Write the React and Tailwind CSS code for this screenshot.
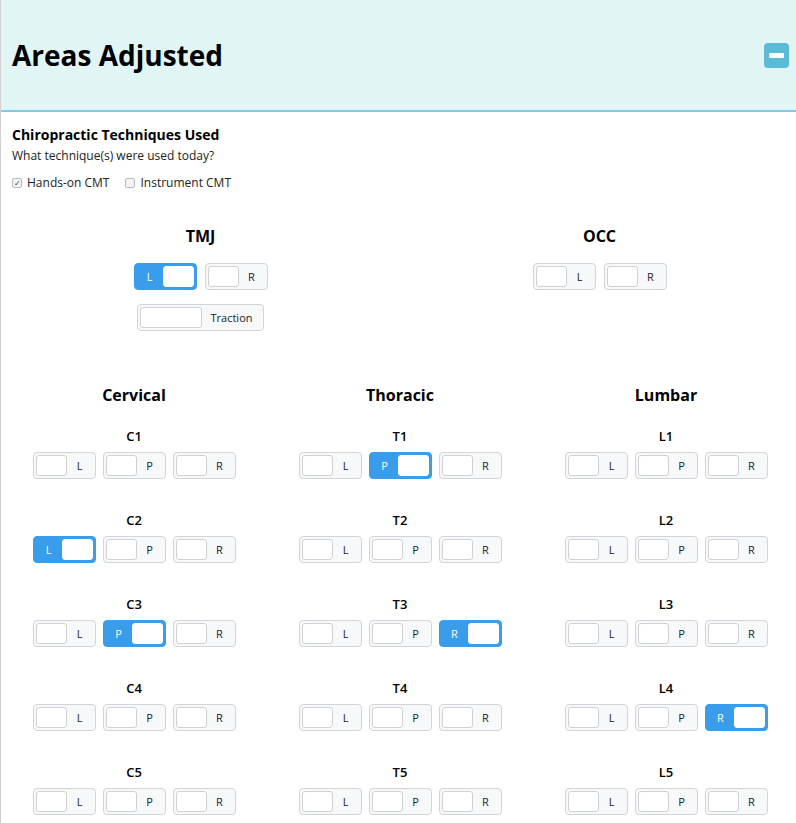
import React from "react";

const font = { fontFamily: '"Open Sans", "Noto Sans", sans-serif' };

const Toggle = ({ label, active, wide }) => (
  <div
    className={`flex h-[27px] items-center rounded-[4px] border p-[2px] ${wide ? "w-[127px]" : "w-[63px]"} ${
      active ? "flex-row-reverse border-[#3a9dec] bg-[#3a9dec]" : "border-[#d2d4d7] bg-[#f7f8fa]"
    }`}
  >
    <div
      className={`h-full rounded-[3px] border bg-white ${wide ? "w-[62px]" : "w-[31px]"} ${
        active ? "border-white" : "border-[#cfd1d4]"
      }`}
    />
    <span className={`flex-1 text-center text-[11px] leading-none ${active ? "text-white" : "text-[#222]"}`}>
      {label}
    </span>
  </div>
);

const Check = ({ checked, label }) => (
  <label className="flex items-center gap-[5px] text-[12px] leading-4 text-[#222]">
    <span className="flex h-[10px] w-[10px] items-center justify-center rounded-[2px] border border-[#b9bbbe] bg-[#f3f3f3] text-[8px] leading-none text-[#444]">
      {checked ? "✓" : ""}
    </span>
    {label}
  </label>
);

const spine = {
  Cervical: { prefix: "C", active: { 2: "L", 3: "P" } },
  Thoracic: { prefix: "T", active: { 1: "P", 3: "R" } },
  Lumbar: { prefix: "L", active: { 4: "R" } },
};

export default function App() {
  return (
    <div className="min-h-screen overflow-hidden border-l border-[#cfcfcf] bg-white text-black" style={font}>
      {/* header */}
      <div className="flex h-[112px] items-center justify-between border-b-2 border-[#7fcae1] bg-[#e1f5f4] pl-[11px] pr-[7px]">
        <h1 className="text-[28px] font-bold leading-none">Areas Adjusted</h1>
        <button className="flex h-[25px] w-[25px] items-center justify-center rounded-[4px] bg-[#5abbd6]">
          <span className="h-[5px] w-[15px] rounded-[1px] bg-white" />
        </button>
      </div>

      <div className="pl-[11px] pt-[13px]">
        <div className="text-[14px] font-bold leading-5">Chiropractic Techniques Used</div>
        <div className="mt-[3px] text-[12px] leading-4 text-[#222]">What technique(s) were used today?</div>
        <div className="mt-[11px] flex gap-[16px]">
          <Check checked label="Hands-on CMT" />
          <Check label="Instrument CMT" />
        </div>
      </div>

      {/* TMJ / OCC */}
      <div className="mt-[33px] grid w-[798px] grid-cols-2">
        <div className="flex flex-col items-center">
          <div className="text-[16px] font-bold leading-6">TMJ</div>
          <div className="mt-[15px] flex gap-[8px]">
            <Toggle label="L" active />
            <Toggle label="R" />
          </div>
          <div className="mt-[14px]">
            <Toggle label="Traction" wide />
          </div>
        </div>
        <div className="flex flex-col items-center">
          <div className="text-[16px] font-bold leading-6">OCC</div>
          <div className="mt-[15px] flex gap-[8px]">
            <Toggle label="L" />
            <Toggle label="R" />
          </div>
        </div>
      </div>

      {/* spine */}
      <div className="mt-[52px] grid w-[798px] grid-cols-3">
        {Object.entries(spine).map(([name, { prefix, active }]) => (
          <div key={name} className="flex flex-col items-center">
            <div className="text-[16px] font-bold leading-6">{name}</div>
            {[1, 2, 3, 4, 5].map((n) => (
              <div key={n} className={`flex flex-col items-center ${n === 1 ? "mt-[20px]" : "mt-[32px]"}`}>
                <div className="text-[13px] font-semibold leading-[18px]">
                  {prefix}
                  {n}
                </div>
                <div className="mt-[7px] flex gap-[7px]">
                  {["L", "P", "R"].map((s) => (
                    <Toggle key={s} label={s} active={active[n] === s} />
                  ))}
                </div>
              </div>
            ))}
          </div>
        ))}
      </div>
    </div>
  );
}
